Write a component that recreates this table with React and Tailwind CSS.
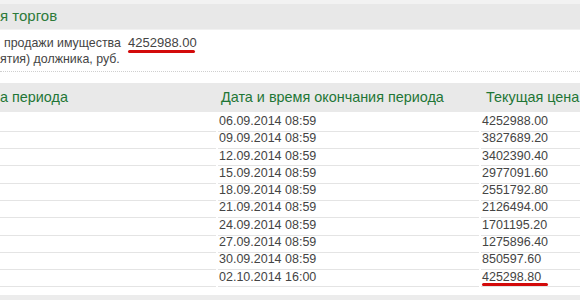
const rows = [
  ['06.09.2014 08:59', '4252988.00'],
  ['09.09.2014 08:59', '3827689.20'],
  ['12.09.2014 08:59', '3402390.40'],
  ['15.09.2014 08:59', '2977091.60'],
  ['18.09.2014 08:59', '2551792.80'],
  ['21.09.2014 08:59', '2126494.00'],
  ['24.09.2014 08:59', '1701195.20'],
  ['27.09.2014 08:59', '1275896.40'],
  ['30.09.2014 08:59', '850597.60'],
  ['02.10.2014 16:00', '425298.80'],
]

function Marked({ children, width }) {
  return (
    <span className="relative inline-block">
      {children}
      <span className={`absolute left-0 top-[15px] h-[3px] rounded-full bg-[#d30a0a] ${width}`} />
    </span>
  )
}

export default function App() {
  return (
    <div className="w-[580px] h-[300px] overflow-hidden bg-white font-['Liberation_Sans',Arial,sans-serif] text-[#444]">
      {/* section title */}
      <div className="h-[4px] bg-[#f2f2f2]" />
      <div className="h-[26px] bg-[#e8e8e8] border-b border-[#f1f1f1] flex items-center text-[15px] text-[#2d7a3a]">
        я торгов
      </div>

      {/* start price */}
      <div className="pt-[5px] h-[42px] flex leading-[16px] border-b border-dotted border-[#cfcfcf]">
        <div className="w-[128px] text-[12.4px]">
          <div className="pl-[4px]">продажи имущества</div>
          <div>ятия) должника, руб.</div>
        </div>
        <div className="text-[13px]">
          <Marked width="w-[67px]">4252988.00</Marked>
        </div>
      </div>

      {/* periods table */}
      <div className="mt-[11px] h-[29px] bg-[#e9e9e9] grid grid-cols-[216px_264px_1fr] items-center text-[14.4px] text-[#1f7636]">
        <div>а периода</div>
        <div className="pl-[5px]">Дата и время окончания периода</div>
        <div className="pl-[6px] whitespace-nowrap">Текущая цена</div>
      </div>
      <div className="flex flex-col text-[12.5px]">
        {rows.map(([date, price], i) => (
          <div key={i} className="grid grid-cols-[216px_261px_1fr] gap-x-[2px] h-[17.3px]">
            <div className="border-b border-[#e4e4e4]" />
            <div className="border-b border-[#e4e4e4] pl-[1px] flex items-center">{date}</div>
            <div className="border-b border-[#e4e4e4] pl-[1px] flex items-center">
              {i === rows.length - 1 ? <Marked width="w-[66px]">{price}</Marked> : price}
            </div>
          </div>
        ))}
      </div>
      <div className="mt-[10px] h-[10px] bg-[#ececec]" />
    </div>
  )
}
